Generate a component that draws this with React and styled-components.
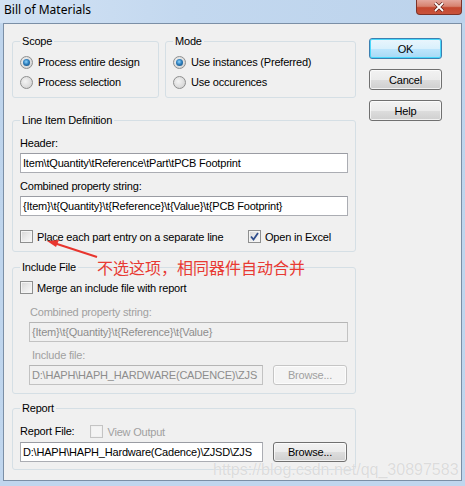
import React from "react";
import styled, { createGlobalStyle } from "styled-components";

const GlobalStyle = createGlobalStyle`
  html, body {
    margin: 0;
    padding: 0;
  }
  body {
    font-family: "Liberation Sans", Arial, sans-serif;
    font-size: 11px;
    letter-spacing: -0.2px;
    color: #000;
  }
`;

const Window = styled.div`
  position: relative;
  width: 465px;
  height: 486px;
  box-sizing: border-box;
  display: flex;
  flex-direction: column;
  padding: 0 3px 5px 3px;
  background: linear-gradient(to bottom, #c9dcf1 0px, #bed4ec 30px, #c0d6ee 100%);
  overflow: hidden;
`;

const TitleBar = styled.div`
  height: 23px;
  display: flex;
  align-items: flex-start;
  justify-content: space-between;
  background: linear-gradient(to right, #d2e2f4 0%, #c3d8ef 40%, #bcd3ec 100%);
  margin: 0 -3px;
  padding: 0 3px;
`;

const Title = styled.span`
  font-family: "Noto Sans", "Open Sans", sans-serif;
  font-size: 12px;
  letter-spacing: 0;
  line-height: 14px;
  padding: 3px 0 0 1px;
  color: #000;
`;

const CloseButton = styled.div`
  width: 46px;
  height: 15px;
  box-sizing: border-box;
  border: 1px solid #7d3328;
  border-top: none;
  border-radius: 0 0 4px 4px;
  background: linear-gradient(to bottom, #e4a79d 0%, #d7826f 45%, #c4472f 55%, #c9533b 100%);
  display: flex;
  align-items: center;
  justify-content: center;
`;

const Client = styled.div`
  flex: 1;
  display: flex;
  align-items: flex-start;
  gap: 13px;
  padding: 11px 0 0 8px;
  border: 1px solid #7b8fa6;
  background: #f0f0f0;
`;

const LeftColumn = styled.div`
  width: 344px;
  display: flex;
  flex-direction: column;
`;

const TopRow = styled.div`
  display: flex;
  gap: 6px;
`;

const Group = styled.fieldset`
  margin: ${(p) => p.$mt || 0}px 0 0 0;
  width: ${(p) => (p.$w ? `${p.$w}px` : "auto")};
  min-width: 0;
  box-sizing: border-box;
  border: 1px solid #d5dfe5;
  border-radius: 3px;
  padding: ${(p) => p.$pt || 0}px 7px ${(p) => p.$pb || 7}px 7px;
`;

const Legend = styled.legend`
  padding: 0 2px;
  margin-left: 0;
  line-height: 13px;
  font-size: 11px;
`;

const OptionRow = styled.label`
  display: flex;
  align-items: center;
  height: 20px;
  gap: 5px;
  white-space: nowrap;
`;

const Radio = styled.span`
  width: 13px;
  height: 13px;
  box-sizing: border-box;
  border-radius: 50%;
  border: 1px solid #8e8f8f;
  background: radial-gradient(circle at 40% 40%, #f4f4f4 0%, #dcdcdc 60%, #c8c8c8 100%);
  display: flex;
  align-items: center;
  justify-content: center;
  flex: none;
  &::after {
    content: "";
    display: ${(p) => (p.$on ? "block" : "none")};
    width: 7px;
    height: 7px;
    border-radius: 50%;
    background: radial-gradient(circle at 45% 40%, #8fd6ff 0%, #2f7fbd 45%, #0c426f 100%);
  }
`;

const FieldLabel = styled.div`
  line-height: 13px;
  margin-top: ${(p) => p.$mt || 0}px;
  padding-left: ${(p) => p.$pl || 0}px;
  color: ${(p) => (p.$disabled ? "#a0a0a0" : "#000")};
  white-space: nowrap;
`;

const TextBox = styled.div`
  height: 20px;
  box-sizing: border-box;
  margin-top: 3px;
  width: ${(p) => (p.$w ? `${p.$w}px` : "100%")};
  flex: none;
  border: 1px solid ${(p) => (p.$disabled ? "#c2c2c2" : "#abadb3")};
  border-top-color: ${(p) => (p.$disabled ? "#b5b5b5" : "#9a9ca3")};
  background: ${(p) => (p.$disabled ? "#f0f0f0" : "#fff")};
  color: ${(p) => (p.$disabled ? "#8d8d8d" : "#000")};
  padding: 0 2px;
  line-height: 18px;
  white-space: nowrap;
  overflow: hidden;
`;

const Indent = styled.div`
  padding-left: ${(p) => p.$pl || 0}px;
`;

const CheckRow = styled.div`
  display: flex;
  align-items: center;
  height: 15px;
  margin-top: ${(p) => p.$mt || 0}px;
`;

const CheckItem = styled.label`
  display: flex;
  align-items: center;
  gap: 4px;
  flex: ${(p) => (p.$w ? `0 0 ${p.$w}px` : "none")};
  margin-left: ${(p) => p.$ml || 0}px;
  white-space: nowrap;
  color: ${(p) => (p.$disabled ? "#a0a0a0" : "#000")};
`;

const CheckBox = styled.span`
  width: 13px;
  height: 13px;
  box-sizing: border-box;
  border: 1px solid ${(p) => (p.$disabled ? "#c4c4c4" : "#8e8f8f")};
  background: ${(p) =>
    p.$disabled
      ? "#f4f4f4"
      : "linear-gradient(135deg, #d6d6d6 0%, #eaeaea 50%, #fafafa 100%)"};
  box-shadow: inset 0 0 0 1px ${(p) => (p.$disabled ? "#f0f0f0" : "#f4f4f4")};
  display: flex;
  align-items: center;
  justify-content: center;
  flex: none;
`;

const InputRow = styled.div`
  display: flex;
  align-items: flex-start;
  gap: 10px;
  margin-top: 3px;
  & > ${TextBox} {
    margin-top: 0;
  }
`;

const Button = styled.div`
  width: ${(p) => p.$w || 73}px;
  height: ${(p) => p.$h || 21}px;
  box-sizing: border-box;
  border-radius: 3px;
  border: 1px solid ${(p) => (p.$default ? "#3c7fb1" : p.$disabled ? "#c5c5c5" : "#707070")};
  background: ${(p) =>
    p.$default
      ? "linear-gradient(to bottom, #eaf6fd 0%, #d9f0fc 50%, #bee6fd 51%, #a7d9f5 100%)"
      : p.$disabled
      ? "#f4f4f4"
      : "linear-gradient(to bottom, #f2f2f2 0%, #ebebeb 50%, #dddddd 51%, #cfcfcf 100%)"};
  box-shadow: inset 0 0 0 1px ${(p) => (p.$default ? "#48d8fb" : "rgba(255,255,255,0.7)")};
  color: ${(p) => (p.$disabled ? "#a0a0a0" : "#000")};
  display: flex;
  align-items: center;
  justify-content: center;
  flex: none;
`;

const ButtonColumn = styled.div`
  display: flex;
  flex-direction: column;
  gap: 10px;
  margin-top: 3px;
`;

const Annotation = styled.div`
  position: absolute;
  left: 97px;
  top: 256px;
  font-family: "Noto Sans CJK SC", sans-serif;
  font-size: 16px;
  letter-spacing: 0;
  line-height: 22px;
  color: #e83a33;
  white-space: nowrap;
`;

const Arrow = styled.svg`
  position: absolute;
  left: 40px;
  top: 234px;
`;

const Watermark = styled.div`
  position: absolute;
  left: 213px;
  top: 461px;
  font-family: "Liberation Sans", Arial, sans-serif;
  font-size: 16px;
  letter-spacing: 0;
  line-height: 18px;
  color: rgba(205, 205, 205, 0.7);
  text-shadow: 0 0 1px #fff;
  white-space: nowrap;
`;

function Check({ on, disabled }) {
  return (
    <CheckBox $disabled={disabled}>
      {on && (
        <svg width="9" height="9" viewBox="0 0 9 9">
          <path d="M1 4.5 L3.5 7.5 L8 1" fill="none" stroke="#2f4d8c" strokeWidth="1.8" />
        </svg>
      )}
    </CheckBox>
  );
}

export default function App() {
  return (
    <>
      <GlobalStyle />
      <Window>
        <TitleBar>
          <Title>Bill of Materials</Title>
          <CloseButton>
            <svg width="12" height="10" viewBox="0 0 12 10">
              <path d="M2 1 L10 9 M10 1 L2 9" stroke="#5a1a12" strokeWidth="3.2" />
              <path d="M2 1 L10 9 M10 1 L2 9" stroke="#fff" strokeWidth="1.8" />
            </svg>
          </CloseButton>
        </TitleBar>
        <Client>
          <LeftColumn>
            <TopRow>
              <Group $w={147} $pt={4} $pb={5}>
                <Legend>Scope</Legend>
                <OptionRow>
                  <Radio $on />
                  Process entire design
                </OptionRow>
                <OptionRow>
                  <Radio />
                  Process selection
                </OptionRow>
              </Group>
              <Group $w={191} $pt={4} $pb={5}>
                <Legend>Mode</Legend>
                <OptionRow>
                  <Radio $on />
                  Use instances (Preferred)
                </OptionRow>
                <OptionRow>
                  <Radio />
                  Use occurences
                </OptionRow>
              </Group>
            </TopRow>

            <Group $mt={16} $pt={10} $pb={7}>
              <Legend>Line Item Definition</Legend>
              <FieldLabel>Header:</FieldLabel>
              <TextBox>Item\tQuantity\tReference\tPart\tPCB Footprint</TextBox>
              <FieldLabel $mt={7}>Combined property string:</FieldLabel>
              <TextBox>{"{Item}\\t{Quantity}\\t{Reference}\\t{Value}\\t{PCB Footprint}"}</TextBox>
              <CheckRow $mt={13}>
                <CheckItem $w={228}>
                  <Check />
                  Place each part entry on a separate line
                </CheckItem>
                <CheckItem>
                  <Check on />
                  Open in Excel
                </CheckItem>
              </CheckRow>
            </Group>

            <Group $mt={9} $pt={6} $pb={8}>
              <Legend>Include File</Legend>
              <CheckRow>
                <CheckItem>
                  <Check />
                  Merge an include file with report
                </CheckItem>
              </CheckRow>
              <Indent $pl={9}>
                <FieldLabel $mt={11} $pl={1} $disabled>
                  Combined property string:
                </FieldLabel>
                <TextBox $disabled>{"{Item}\\t{Quantity}\\t{Reference}\\t{Value}"}</TextBox>
                <FieldLabel $mt={7} $pl={3} $disabled>
                  Include file:
                </FieldLabel>
                <InputRow>
                  <TextBox $w={234} $disabled>
                    D:\HAPH\HAPH_HARDWARE(CADENCE)\ZJS
                  </TextBox>
                  <Button $w={74} $h={20} $disabled>
                    Browse...
                  </Button>
                </InputRow>
              </Indent>
            </Group>

            <Group $mt={8} $pt={9} $pb={7}>
              <Legend>Report</Legend>
              <CheckRow>
                <FieldLabel>Report File:</FieldLabel>
                <CheckItem $disabled $ml={16}>
                  <Check disabled />
                  View Output
                </CheckItem>
              </CheckRow>
              <InputRow>
                <TextBox $w={243}>D:\HAPH\HAPH_Hardware(Cadence)\ZJSD\ZJS</TextBox>
                <Button $w={74} $h={20}>
                  Browse...
                </Button>
              </InputRow>
            </Group>
          </LeftColumn>

          <ButtonColumn>
            <Button $default>OK</Button>
            <Button>Cancel</Button>
            <Button>Help</Button>
          </ButtonColumn>
        </Client>

        <Arrow width="60" height="28" viewBox="0 0 60 28">
          <path d="M57 23 L14 9" stroke="#e8352e" strokeWidth="2" fill="none" />
          <path d="M7 7 L19 6 L16 13 Z" fill="#e8352e" />
        </Arrow>
        <Annotation>不选这项，相同器件自动合并</Annotation>
        <Watermark>https://blog.csdn.net/qq_30897583</Watermark>
      </Window>
    </>
  );
}
